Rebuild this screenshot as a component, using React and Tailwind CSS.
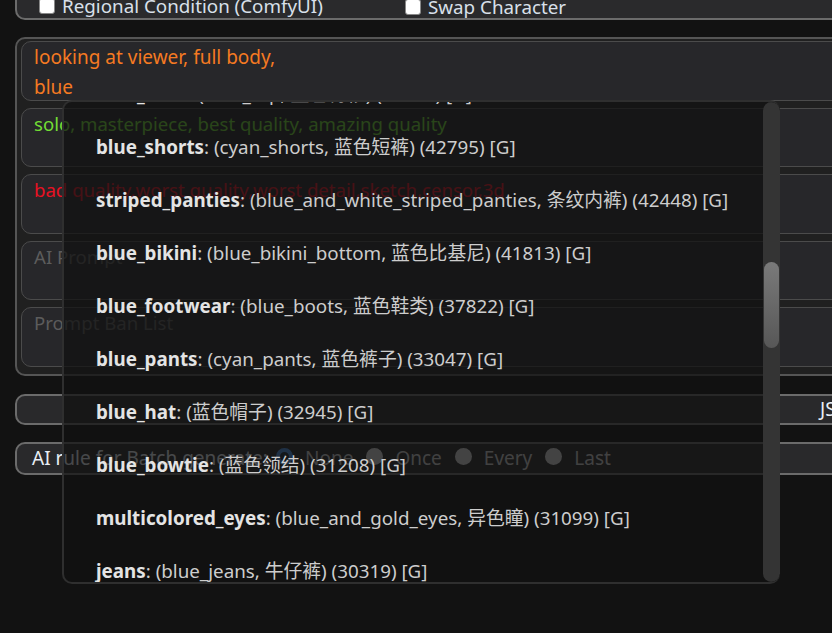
import React from "react";

const FONT = { fontFamily: '"Noto Sans", "Noto Sans CJK SC", sans-serif' };

const TAGS = [
  ["blue_shirt", "(blue_top, 蓝色衬衫) (48519) [G]"],
  ["blue_shorts", "(cyan_shorts, 蓝色短裤) (42795) [G]"],
  ["striped_panties", "(blue_and_white_striped_panties, 条纹内裤) (42448) [G]"],
  ["blue_bikini", "(blue_bikini_bottom, 蓝色比基尼) (41813) [G]"],
  ["blue_footwear", "(blue_boots, 蓝色鞋类) (37822) [G]"],
  ["blue_pants", "(cyan_pants, 蓝色裤子) (33047) [G]"],
  ["blue_hat", "(蓝色帽子) (32945) [G]"],
  ["blue_bowtie", "(蓝色领结) (31208) [G]"],
  ["multicolored_eyes", "(blue_and_gold_eyes, 异色瞳) (31099) [G]"],
  ["jeans", "(blue_jeans, 牛仔裤) (30319) [G]"],
  ["blue_gloves", "(蓝色手套) (29871) [G]"],
];

const Checkbox = ({ label }) => (
  <label className="flex items-center gap-[7px]">
    <span className="w-[16px] h-[16px] rounded-[3px] bg-white border border-[#888]" />
    <span className="text-[18.8px] leading-[20px] text-[#d9e0ea]">{label}</span>
  </label>
);

const PromptBox = ({ text, color, placeholder }) => (
  <div className="h-[59.5px] rounded-[10px] border border-[#4b4b4b] bg-[#27272a] pl-[12px] pr-[8px] text-[18.6px] leading-[30px] overflow-hidden whitespace-nowrap">
    {text ? (
      <div className={color}>{text}</div>
    ) : (
      <div className="text-[#5c5c5c]">{placeholder}</div>
    )}
  </div>
);

const Radio = ({ label, checked }) => (
  <label className="flex items-center gap-[12px] mr-[13px]">
    {checked ? (
      <span className="w-[17px] h-[17px] rounded-full border-[4px] border-[#4a90e2] bg-[#1b2a3a] -mt-[3px]" />
    ) : (
      <span className="w-[17px] h-[17px] rounded-full bg-[#d8d8d8] -mt-[3px]" />
    )}
    <span className="text-[19px] text-[#cfcfcf]">{label}</span>
  </label>
);

const TagMenu = () => (
  <div className="absolute left-[62px] top-[100px] w-[718px] h-[484px] rounded-[10px] border-l-2 border-b-2 border-t-2 border-[#2f2f2f] bg-[#121212]/75 overflow-hidden">
    <div className="flex h-full">
      <div className="flex-1 overflow-hidden">
        <div className="mt-[-34px] flex flex-col">
          {TAGS.map(([name, rest]) => (
            <div key={name} className="h-[53px] flex items-center pl-[32px] text-[18.8px] whitespace-nowrap">
              <span className="font-bold text-[#e4e4e4]">{name}</span>
              <span className="text-[#cdcdcd]">: {rest}</span>
            </div>
          ))}
        </div>
      </div>
      {/* scrollbar */}
      <div className="w-[17px] h-full rounded-full bg-[#343434] pt-[160px] flex justify-center">
        <div className="w-[15px] h-[86px] rounded-full bg-gradient-to-b from-[#7a7a7a] to-[#575757]" />
      </div>
    </div>
  </div>
);

export default function App() {
  return (
    <div className="relative w-[832px] h-[633px] overflow-hidden bg-[#121212]" style={FONT}>
      {/* top panel (scrolled off) */}
      <div className="ml-[15px] w-[900px] mt-[-30px] h-[50px] border-2 border-[#6b6b6b] rounded-[10px] bg-[#2a2a2c] pt-[24px] pl-[22px] flex">
        <div className="w-[366px]">
          <Checkbox label="Regional Condition (ComfyUI)" />
        </div>
        <Checkbox label="Swap Character" />
      </div>

      {/* prompts */}
      <div className="ml-[15px] w-[900px] mt-[17px] border-2 border-[#555] rounded-[10px] bg-[#202020] pt-[2px] px-[4px] pb-[7px] flex flex-col gap-[7px]">
        <div className="h-[59.5px] rounded-[10px] border border-[#4b4b4b] bg-[#27272a] pl-[12px] text-[19px] leading-[30px] text-[#f57a22]">
          <div>looking at viewer, full body,</div>
          <div>blue</div>
        </div>
        <PromptBox text="solo, masterpiece, best quality, amazing quality" color="text-[#72dd34]" />
        <PromptBox text="bad quality,worst quality,worst detail,sketch,censor,3d" color="text-[#e81123]" />
        <PromptBox placeholder="AI Prompt" />
        <PromptBox placeholder="Prompt Ban List" />
      </div>

      {/* button bar */}
      <div className="ml-[15px] w-[900px] mt-[18px] h-[31px] border-2 border-[#6b6b6b] rounded-[10px] bg-[#29292b] flex items-center">
        <div className="w-[803px]" />
        <span className="text-[19px] text-[#e8eef5]">JSON</span>
      </div>

      {/* batch rule */}
      <div className="ml-[15px] w-[900px] mt-[17px] h-[33px] border-2 border-[#6b6b6b] rounded-[10px] bg-[#29292b] flex items-center pl-[15px]">
        <span className="w-[244px] text-[19px] text-[#e8eef5] whitespace-nowrap">AI rule for Batch generate:</span>
        <Radio label="None" checked />
        <Radio label="Once" />
        <Radio label="Every" />
        <Radio label="Last" />
      </div>

      <TagMenu />
    </div>
  );
}
